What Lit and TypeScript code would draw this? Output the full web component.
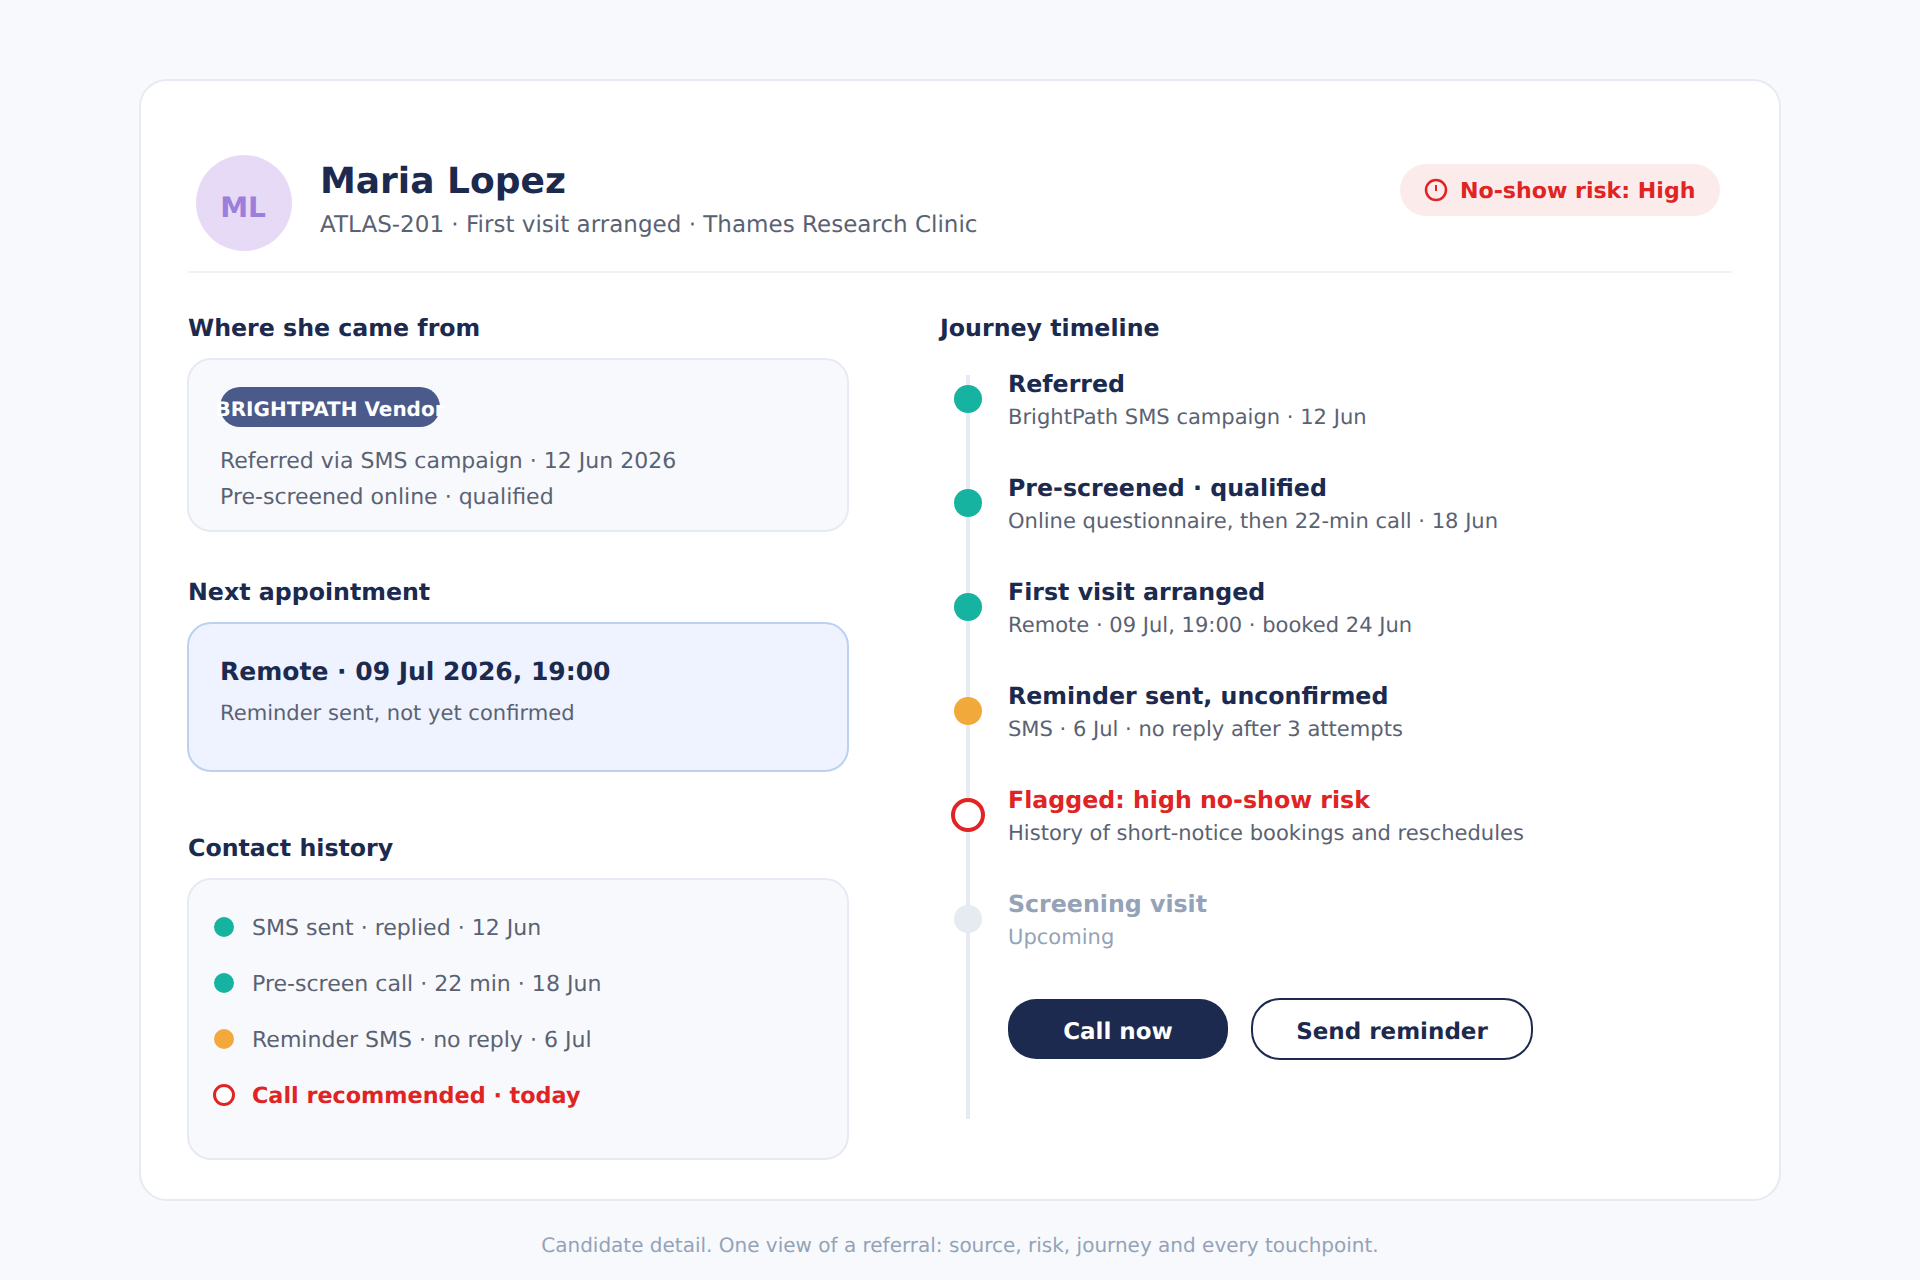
import { LitElement, css, html } from "lit";
import { customElement } from "lit/decorators.js";

type Tone = "done" | "warn" | "flag" | "todo";

const steps: { tone: Tone; title: string; sub: string }[] = [
  { tone: "done", title: "Referred", sub: "BrightPath SMS campaign · 12 Jun" },
  { tone: "done", title: "Pre-screened · qualified", sub: "Online questionnaire, then 22-min call · 18 Jun" },
  { tone: "done", title: "First visit arranged", sub: "Remote · 09 Jul, 19:00 · booked 24 Jun" },
  { tone: "warn", title: "Reminder sent, unconfirmed", sub: "SMS · 6 Jul · no reply after 3 attempts" },
  { tone: "flag", title: "Flagged: high no-show risk", sub: "History of short-notice bookings and reschedules" },
  { tone: "todo", title: "Screening visit", sub: "Upcoming" },
];

const contacts: { tone: Tone; text: string }[] = [
  { tone: "done", text: "SMS sent · replied · 12 Jun" },
  { tone: "done", text: "Pre-screen call · 22 min · 18 Jun" },
  { tone: "warn", text: "Reminder SMS · no reply · 6 Jul" },
  { tone: "flag", text: "Call recommended · today" },
];

@customElement("app-root")
export class AppRoot extends LitElement {
  static styles = css`
    :host {
      display: block;
      height: 1280px;
      box-sizing: border-box;
      padding: 79px 139px 0;
      background: #f8f9fd;
      font-family: "DejaVu Sans", sans-serif;
      text-rendering: geometricPrecision;
      color: #1b2a4e;
    }

    .card {
      box-sizing: border-box;
      height: 1122px;
      padding: 0 47px;
      background: #fff;
      border: 2px solid #e6eaf2;
      border-radius: 28px;
    }

    .header {
      display: flex;
      align-items: flex-start;
      height: 192px;
      box-sizing: border-box;
      padding: 74px 12px 0 8px;
      border-bottom: 2px solid #f0f1f6;
    }
    .avatar {
      width: 96px;
      height: 96px;
      box-sizing: border-box;
      padding: 8px 2px 0 0;
      border-radius: 50%;
      background: #e7daf7;
      color: #9b7fdb;
      font-size: 28px;
      font-weight: 700;
      display: flex;
      align-items: center;
      justify-content: center;
      flex: none;
    }
    .who {
      margin-left: 28px;
      flex: 1;
    }
    .name {
      font-size: 36px;
      font-weight: 700;
      line-height: 40px;
      margin-top: 7px;
    }
    .meta {
      font-size: 23.04px;
      line-height: 28px;
      color: #5a6272;
      margin-top: 9px;
    }
    .risk {
      width: 320px;
      height: 52px;
      box-sizing: border-box;
      margin-top: 9px;
      padding: 2px 0 0 24px;
      display: flex;
      align-items: center;
      gap: 12px;
      border-radius: 26px;
      background: #fcebeb;
      color: #e02424;
      font-size: 22.1px;
      font-weight: 700;
    }
    .risk svg {
      flex: none;
      margin-top: -2px;
    }

    .columns {
      display: grid;
      grid-template-columns: 660px 1fr;
      column-gap: 92px;
      padding-top: 42px;
    }

    h2 {
      margin: 0 0 17px;
      font-size: 23.7px;
      line-height: 26px;
      font-weight: 700;
    }
    .left h2:not(:first-child) {
      margin-top: 47px;
    }
    .left h2.far {
      margin-top: 63px;
    }

    .box {
      box-sizing: border-box;
      margin: 0 -1px;
      border: 2px solid #e6eaf2;
      border-radius: 24px;
      background: #f8f9fd;
    }
    .source {
      height: 174px;
      padding: 27px 31px 0;
    }
    .pill {
      width: 220px;
      height: 40px;
      box-sizing: border-box;
      padding-top: 3px;
      border-radius: 20px;
      background: #4a5a8a;
      color: #fff;
      font-size: 20px;
      font-weight: 700;
      white-space: nowrap;
      display: flex;
      align-items: center;
      justify-content: center;
    }
    .source p {
      margin: 0;
      font-size: 22px;
      line-height: 36px;
      color: #5a6272;
    }
    .source .pill + p {
      margin-top: 17px;
    }

    .appt {
      height: 150px;
      padding: 33px 31px 0;
      background: #eef3ff;
      border-color: #bcd1f2;
    }
    .appt strong {
      display: block;
      font-size: 25px;
      line-height: 30px;
    }
    .appt span {
      display: block;
      margin-top: 13px;
      font-size: 21.05px;
      line-height: 26px;
      color: #5a6272;
    }

    .history {
      height: 282px;
      padding: 19px 25px 0;
    }
    .contact {
      height: 56px;
      display: flex;
      align-items: center;
      gap: 18px;
      font-size: 22.05px;
      color: #5a6272;
    }
    .contact span:last-child {
      padding-top: 2px;
    }
    .contact.flag {
      color: #e02424;
      font-size: 22.3px;
      font-weight: 700;
    }
    .contact .dot {
      width: 20px;
      height: 20px;
    }
    .contact .dot.flag {
      width: 22px;
      height: 22px;
      margin: 0 -1px;
      border-width: 3px;
    }

    .dot {
      box-sizing: border-box;
      border-radius: 50%;
      flex: none;
    }
    .dot.done {
      background: #17b3a1;
    }
    .dot.warn {
      background: #f2a93b;
    }
    .dot.flag {
      background: #fff;
      border: 4px solid #e02424;
    }
    .dot.todo {
      background: #e6eaf1;
    }

    .timeline {
      padding: 9px 0 0 10px;
      background: linear-gradient(#e6eaf2, #e6eaf2) no-repeat 26px 17px / 4px 744px;
    }
    .step {
      height: 104px;
      box-sizing: border-box;
      padding-top: 3px;
      display: grid;
      grid-template-columns: 36px 1fr;
      column-gap: 22px;
    }
    .step .dot {
      width: 28px;
      height: 28px;
      justify-self: center;
      margin-top: 15px;
    }
    .step .dot.flag {
      width: 34px;
      height: 34px;
      margin-top: 12px;
    }
    .title {
      font-size: 23.7px;
      line-height: 28px;
      font-weight: 700;
    }
    .sub {
      margin-top: 5px;
      font-size: 21.05px;
      line-height: 28px;
      color: #5a6272;
    }
    .step.flag .title {
      color: #e02424;
    }
    .step.todo .title,
    .step.todo .sub {
      color: #94a3b8;
    }

    .actions {
      display: flex;
      align-items: center;
      gap: 24px;
      margin: 7px 0 0 58px;
      padding: 1px 0 60px;
    }
    button {
      height: 60px;
      box-sizing: border-box;
      border-radius: 28px;
      font: 700 23px "DejaVu Sans", sans-serif;
      text-rendering: geometricPrecision;
      padding: 6px 0 0;
    }
    .primary {
      width: 220px;
      background: #1b2a4e;
      border: 0;
      color: #fff;
    }
    .secondary {
      width: 282px;
      height: 62px;
      margin: -1px;
      background: #fff;
      border: 2px solid #1b2a4e;
      border-radius: 29px;
      color: #1b2a4e;
    }

    .foot {
      margin-top: 32px;
      text-align: center;
      font-size: 20px;
      line-height: 24px;
      color: #94a3b8;
    }
  `;

  render() {
    return html`
      <div class="card">
        <div class="header">
          <div class="avatar">ML</div>
          <div class="who">
            <div class="name">Maria Lopez</div>
            <div class="meta">ATLAS-201 · First visit arranged · Thames Research Clinic</div>
          </div>
          <div class="risk">
            <svg width="24" height="24" viewBox="0 0 24 24" fill="none" stroke="#e02424" stroke-width="2.5">
              <circle cx="12" cy="12" r="10"></circle>
              <path d="M12 7v6" stroke-width="2"></path>
            </svg>
            No-show risk: High
          </div>
        </div>
        <div class="columns">
          <div class="left">
            <h2>Where she came from</h2>
            <div class="box source">
              <div class="pill">BRIGHTPATH Vendor</div>
              <p>Referred via SMS campaign · 12 Jun 2026</p>
              <p>Pre-screened online · qualified</p>
            </div>
            <h2>Next appointment</h2>
            <div class="box appt">
              <strong>Remote · 09 Jul 2026, 19:00</strong>
              <span>Reminder sent, not yet confirmed</span>
            </div>
            <h2 class="far">Contact history</h2>
            <div class="box history">
              ${contacts.map(
                (c) => html`<div class="contact ${c.tone}"><span class="dot ${c.tone}"></span><span>${c.text}</span></div>`
              )}
            </div>
          </div>
          <div>
            <h2>Journey timeline</h2>
            <div class="timeline">
              ${steps.map(
                (s) => html`
                  <div class="step ${s.tone}">
                    <span class="dot ${s.tone}"></span>
                    <div>
                      <div class="title">${s.title}</div>
                      <div class="sub">${s.sub}</div>
                    </div>
                  </div>
                `
              )}
              <div class="actions">
                <button class="primary">Call now</button>
                <button class="secondary">Send reminder</button>
              </div>
            </div>
          </div>
        </div>
      </div>
      <div class="foot">Candidate detail. One view of a referral: source, risk, journey and every touchpoint.</div>
    `;
  }
}
